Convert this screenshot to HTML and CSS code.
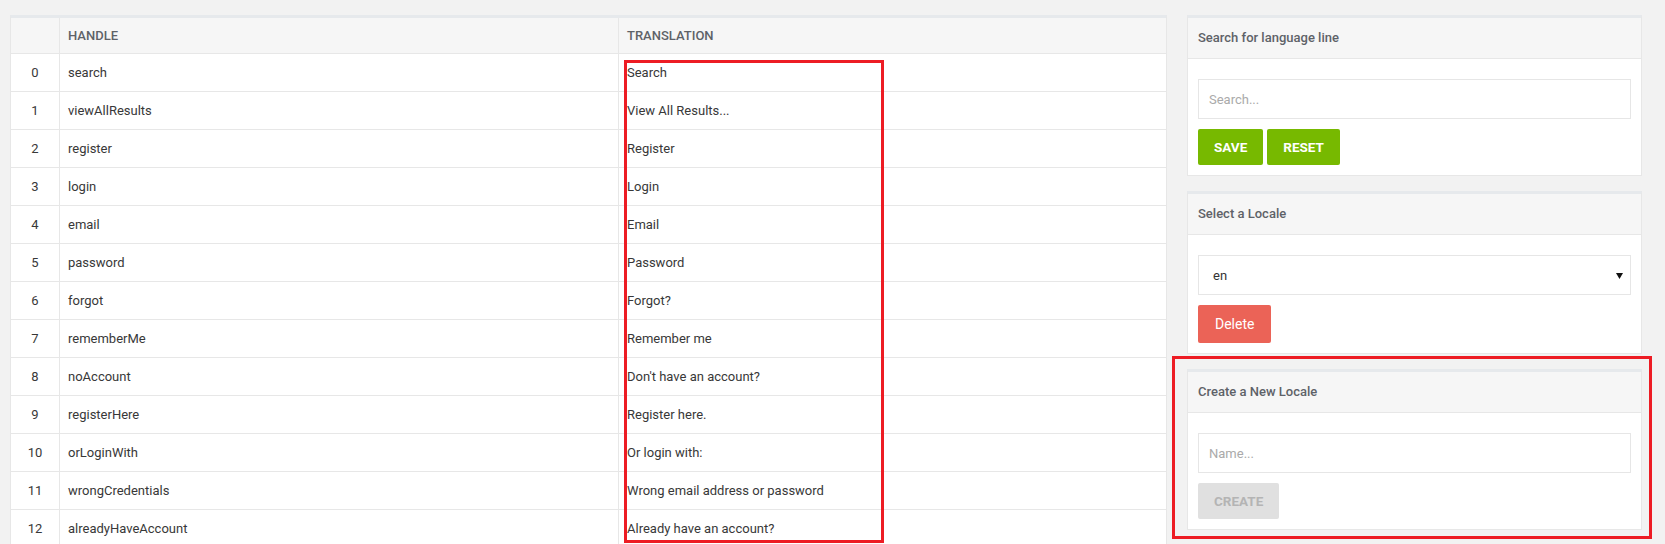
FILE: index.html
```html
<!DOCTYPE html>
<html lang="en">
<head>
<meta charset="utf-8">
<title>Language lines</title>
<link rel="stylesheet" href="styles.css">
</head>
<body>
<div class="page">
  <div class="table-card">
    <table class="lines">
      <colgroup><col class="c-num"><col class="c-handle"><col></colgroup>
      <thead>
        <tr><th class="num"></th><th>Handle</th><th>Translation</th></tr>
      </thead>
      <tbody>
        <tr><td class="num">0</td><td>search</td><td>Search</td></tr>
        <tr><td class="num">1</td><td>viewAllResults</td><td>View All Results...</td></tr>
        <tr><td class="num">2</td><td>register</td><td>Register</td></tr>
        <tr><td class="num">3</td><td>login</td><td>Login</td></tr>
        <tr><td class="num">4</td><td>email</td><td>Email</td></tr>
        <tr><td class="num">5</td><td>password</td><td>Password</td></tr>
        <tr><td class="num">6</td><td>forgot</td><td>Forgot?</td></tr>
        <tr><td class="num">7</td><td>rememberMe</td><td>Remember me</td></tr>
        <tr><td class="num">8</td><td>noAccount</td><td>Don't have an account?</td></tr>
        <tr><td class="num">9</td><td>registerHere</td><td>Register here.</td></tr>
        <tr><td class="num">10</td><td>orLoginWith</td><td>Or login with:</td></tr>
        <tr><td class="num">11</td><td>wrongCredentials</td><td>Wrong email address or password</td></tr>
        <tr><td class="num">12</td><td>alreadyHaveAccount</td><td>Already have an account?</td></tr>
      </tbody>
    </table>
  </div>

  <aside class="sidebar">
    <section class="card">
      <header class="card-head">Search for language line</header>
      <div class="card-body">
        <input class="field" type="text" placeholder="Search...">
        <div class="actions">
          <button class="btn btn-green">Save</button>
          <button class="btn btn-green">Reset</button>
        </div>
      </div>
    </section>

    <section class="card">
      <header class="card-head">Select a Locale</header>
      <div class="card-body">
        <div class="select-box">
          <select class="select"><option>en</option></select>
          <span class="arrow"><svg width="7" height="6" viewBox="0 0 7 6"><path d="M0 0H7L3.5 6Z" fill="#111"/></svg></span>
        </div>
        <div class="actions">
          <button class="btn btn-red">Delete</button>
        </div>
      </div>
    </section>

    <section class="card">
      <header class="card-head">Create a New Locale</header>
      <div class="card-body">
        <input class="field" type="text" placeholder="Name...">
        <div class="actions">
          <button class="btn btn-disabled" disabled>Create</button>
        </div>
      </div>
    </section>
  </aside>

  <div class="annot annot-table"></div>
  <div class="annot annot-side"></div>
</div>
</body>
</html>
```

FILE: styles.css
```css
* { box-sizing: border-box; }

html, body {
  margin: 0;
  padding: 0;
  background: #f2f2f2;
  font-family: Roboto, "Liberation Sans", Arial, sans-serif;
  font-size: 13px;
  color: #333;
  height: 100%;
  overflow: hidden;
}

.page {
  position: relative;
  display: flex;
  align-items: flex-start;
  gap: 20px;
  padding: 15px 0 0 10px;
}

.table-card {
  width: 1157px;
  flex: none;
  background: #fff;
  border-top: 3px solid #e6e9ec;
  border-left: 1px solid #e7e7e7;
  border-right: 1px solid #e7e7e7;
}

.lines {
  width: 100%;
  table-layout: fixed;
  border-collapse: separate;
  border-spacing: 0;
}

.c-num { width: 48px; }
.c-handle { width: 559px; }

.lines th,
.lines td {
  padding: 0 0 0 8px;
  text-align: left;
  border-bottom: 1px solid #e7e7e7;
  border-left: 1px solid #e7e7e7;
  white-space: nowrap;
  overflow: hidden;
}

.lines th:first-child,
.lines td:first-child {
  border-left: none;
}

.lines th {
  background: #f6f6f6;
  line-height: 35px;
  font-weight: 500;
  text-transform: uppercase;
  color: #5e6268;
}

.lines td {
  line-height: 37px;
  font-weight: 400;
  color: #383838;
}

.lines .num {
  text-align: center;
  padding: 0;
}

.sidebar {
  width: 455px;
  flex: none;
  display: flex;
  flex-direction: column;
  gap: 15px;
}

.card {
  background: #fff;
  border: 1px solid #e7e7e7;
  border-top: 3px solid #e6e9ec;
}

.card-head {
  height: 41px;
  line-height: 40px;
  padding: 0 10px;
  background: #f6f6f6;
  border-bottom: 1px solid #e7e7e7;
  font-weight: 500;
  font-size: 13px;
  color: #5e6268;
}

.card-body {
  padding: 20px 10px 10px;
  display: flex;
  flex-direction: column;
  gap: 10px;
}

.field {
  display: block;
  width: 100%;
  height: 40px;
  margin: 0;
  padding: 0 10px;
  border: 1px solid #e6e6e6;
  border-radius: 0;
  background: #fff;
  font-family: inherit;
  font-size: 13px;
  color: #333;
  outline: none;
}

.field::placeholder {
  color: #aaa;
}

.select-box {
  display: flex;
  align-items: center;
  height: 40px;
  border: 1px solid #e6e6e6;
  background: #fff;
  padding: 0 7px 0 0;
}

.select {
  flex: 1;
  height: 100%;
  border: none;
  background: transparent;
  appearance: none;
  -webkit-appearance: none;
  font-family: inherit;
  font-size: 13px;
  color: #333;
  padding: 0 0 0 14px;
  outline: none;
}

.arrow {
  display: flex;
  width: 7px;
  height: 6px;
  margin-top: 1px;
}

.actions {
  display: flex;
  gap: 4px;
}

.btn {
  height: 36px;
  padding: 0 16px;
  border: none;
  border-radius: 2px;
  font-family: inherit;
  font-size: 13.5px;
  font-weight: 700;
  text-transform: uppercase;
  cursor: pointer;
}

.btn-green {
  background: #77b900;
  color: #fff;
}

.btn-red {
  height: 38px;
  background: #eb6357;
  color: #fff;
  font-size: 14px;
  font-weight: 400;
  text-transform: none;
  padding: 0 17px;
}

.btn-disabled {
  background: #e0e0e0;
  color: #b4b4b4;
  cursor: default;
}

.annot {
  position: absolute;
  border: 3px solid #ed1c24;
  pointer-events: none;
}

.annot-table {
  left: 624px;
  top: 60px;
  width: 260px;
  height: 483px;
}

.annot-side {
  left: 1172px;
  top: 356px;
  width: 480px;
  height: 183px;
}
```
